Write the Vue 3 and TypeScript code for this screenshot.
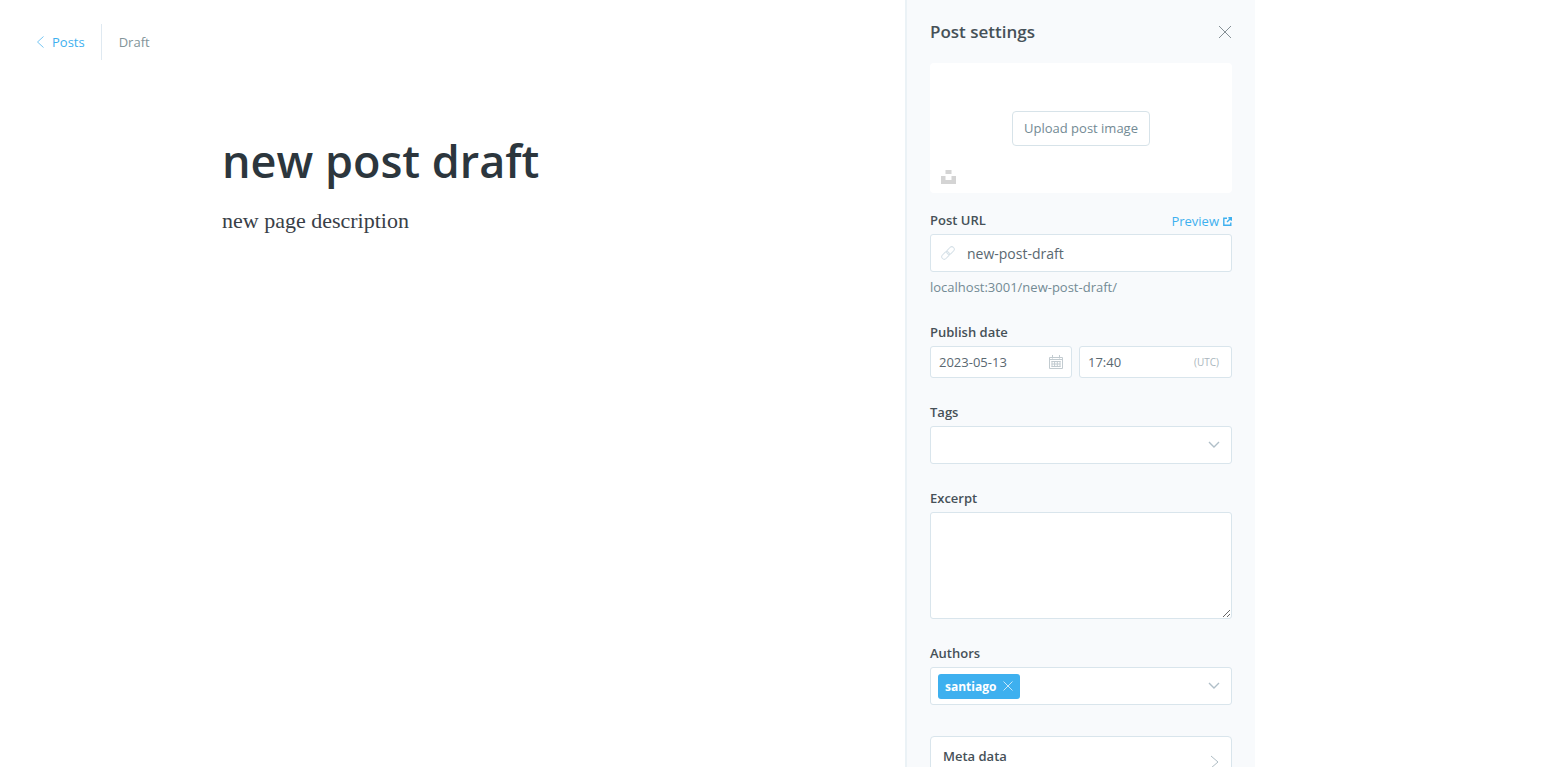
<script setup lang="ts">
import { ref } from 'vue'

const title = ref('new post draft')
const slug = ref('new-post-draft')
const publishDate = ref('2023-05-13')
const publishTime = ref('17:40')
const tag = ref('')
const excerpt = ref('')
const authors = ref<string[]>(['santiago'])

function removeAuthor(name: string): void {
  authors.value = authors.value.filter((author) => author !== name)
}
</script>

<template>
  <div class="screen">
    <main class="editor">
      <nav class="crumbs">
        <a class="back" href="#posts">
          <svg width="9" height="14" viewBox="0 0 9 14" aria-hidden="true">
            <path d="M7.5 1.5 1.5 7l6 5.5" />
          </svg>
          <span>Posts</span>
        </a>
        <span class="status">Draft</span>
      </nav>
      <article class="document">
        <input v-model="title" class="title" type="text" aria-label="Post title" spellcheck="false" />
        <p class="body">new page description</p>
      </article>
    </main>

    <aside class="panel">
      <header class="panel-head">
        <h2>Post settings</h2>
        <button class="close" type="button" aria-label="Close">
          <svg width="14" height="14" viewBox="0 0 14 14" aria-hidden="true">
            <path d="M1 1l12 12M13 1 1 13" />
          </svg>
        </button>
      </header>

      <section class="uploader">
        <button class="upload" type="button">Upload post image</button>
        <button class="unsplash" type="button" aria-label="Unsplash">
          <svg width="15" height="14" viewBox="0 0 15 14" aria-hidden="true">
            <path d="M4.5 0h6v4h-6zM0 6h4.5v4h6V6H15v8H0z" />
          </svg>
        </button>
      </section>

      <div class="field">
        <div class="label-row">
          <label for="slug">Post URL</label>
          <a class="preview" href="#preview">
            <span>Preview</span>
            <svg width="9" height="9" viewBox="0 0 9 9" aria-hidden="true">
              <path d="M4 1.2H.8v7h7V5.4M5.4.8h2.9v2.9M8 1 4 5" />
            </svg>
          </a>
        </div>
        <div class="box tall">
          <svg class="link-icon" width="14" height="14" viewBox="0 0 14 14" aria-hidden="true">
            <g transform="rotate(-45 7 7)">
              <rect x="-.8" y="4.5" width="8.6" height="5" rx="2.5" />
              <rect x="6.2" y="4.5" width="8.6" height="5" rx="2.5" />
            </g>
          </svg>
          <input id="slug" v-model="slug" class="slug" type="text" spellcheck="false" />
        </div>
        <p class="help">localhost:3001/{{ slug }}/</p>
      </div>

      <div class="field">
        <label for="publish-date">Publish date</label>
        <div class="dates">
          <div class="box">
            <input id="publish-date" v-model="publishDate" type="text" />
            <svg class="calendar" width="14" height="14" viewBox="0 0 14 14" aria-hidden="true">
              <path d="M.5 2.5h13v11H.5zM.5 4.5h13M3.5 0v3.5M10.5 0v3.5M2.5 6.5h9M2.5 9h9M2.5 11.5h9M3 6v6M5.6 6v6M8.3 6v6M11 6v6" />
            </svg>
          </div>
          <div class="box">
            <input v-model="publishTime" type="text" aria-label="Publish time" />
            <span class="zone">(UTC)</span>
          </div>
        </div>
      </div>

      <div class="field">
        <label for="tags">Tags</label>
        <div class="box tall">
          <select id="tags" v-model="tag"><option value=""></option></select>
          <svg class="chevron" width="12" height="8" viewBox="0 0 12 8" aria-hidden="true">
            <path d="M1 1l5 5 5-5" />
          </svg>
        </div>
      </div>

      <div class="field">
        <label for="excerpt">Excerpt</label>
        <textarea id="excerpt" v-model="excerpt"></textarea>
      </div>

      <div class="field">
        <label for="authors">Authors</label>
        <div class="box tall">
          <span v-for="author in authors" :key="author" class="chip">
            <span>{{ author }}</span>
            <button type="button" :aria-label="`Remove ${author}`" @click="removeAuthor(author)">
              <svg width="10" height="10" viewBox="0 0 10 10" aria-hidden="true">
                <path d="M.5.5l9 9M9.5.5l-9 9" />
              </svg>
            </button>
          </span>
          <select id="authors"><option value=""></option></select>
          <svg class="chevron" width="12" height="8" viewBox="0 0 12 8" aria-hidden="true">
            <path d="M1 1l5 5 5-5" />
          </svg>
        </div>
      </div>

      <button class="meta" type="button">
        <span>Meta data</span>
        <svg width="9" height="14" viewBox="0 0 9 14" aria-hidden="true">
          <path d="M1 1l7 6-7 6" />
        </svg>
      </button>
    </aside>
  </div>
</template>

<style>
body {
  margin: 0;
  background: #fff;
}
</style>

<style scoped>
.screen {
  display: grid;
  grid-template-columns: 1fr 350px 289px;
  height: 100vh;
  overflow: hidden;
  font-family: "Open Sans", "Noto Sans", sans-serif;
  font-size: 13px;
  color: #465158;
}
.screen *,
.screen *::before {
  box-sizing: border-box;
}
svg {
  display: block;
  flex: none;
  fill: none;
  stroke: currentColor;
}
button,
input,
select,
textarea {
  font: inherit;
  color: inherit;
}
button {
  padding: 0;
  border: 0;
  background: none;
  cursor: pointer;
}
a {
  color: #3eb0ef;
  text-decoration: none;
}
.editor {
  min-width: 0;
}
.crumbs {
  display: flex;
  align-items: center;
  height: 36px;
  margin: 24px 36px 0;
}
.back {
  display: flex;
  align-items: center;
  gap: 7px;
  height: 36px;
  padding-right: 16px;
  border-right: 1px solid #dfe9f1;
}
.back svg {
  opacity: 0.7;
}
.status {
  padding-left: 17px;
  color: #839499;
}
.document {
  margin: 68px 36px 0 222px;
}
.title {
  display: block;
  width: 100%;
  height: 64px;
  padding: 0;
  border: 0;
  outline: 0;
  background: none;
  color: #2c363d;
  font-size: 45px;
  font-weight: 600;
}
.body {
  margin: 14px 0 0;
  color: #394047;
  font-family: Georgia, "Liberation Serif", serif;
  font-size: 22px;
  line-height: 30px;
}
.panel {
  padding: 18px 23px 0;
  border-left: 2px solid #ebf2f6;
  background: #f8fafc;
  overflow: hidden;
}
.panel-head {
  display: flex;
  align-items: center;
  justify-content: space-between;
  height: 27px;
  margin-bottom: 18px;
}
h2 {
  margin: 0;
  font-size: 17px;
  font-weight: 600;
  line-height: 27px;
}
.close {
  color: #858f95;
}
.uploader {
  position: relative;
  display: flex;
  align-items: center;
  justify-content: center;
  height: 130px;
  margin-bottom: 18px;
  border-radius: 4px;
  background: #fff;
}
.upload {
  height: 35px;
  padding: 0 11px;
  border: 1px solid #d7e3e9;
  border-radius: 4px;
  color: #738a94;
}
.unsplash {
  position: absolute;
  bottom: 9px;
  left: 11px;
  color: #d4d4d4;
}
.unsplash svg {
  fill: currentColor;
  stroke: none;
}
.field {
  margin-bottom: 25px;
}
label {
  display: block;
  margin-bottom: 5px;
  font-weight: 600;
  line-height: 18px;
}
.label-row {
  display: flex;
  justify-content: space-between;
}
.preview {
  display: flex;
  align-items: center;
  gap: 4px;
  height: 20px;
}
.preview svg {
  stroke-width: 1.4;
}
.box {
  display: flex;
  align-items: center;
  min-width: 0;
  height: 32px;
  border: 1px solid #d9e5ec;
  border-radius: 3px;
  background: #fff;
}
.tall {
  height: 38px;
}
.box input,
.box select {
  flex: 1;
  align-self: stretch;
  min-width: 0;
  padding: 0 8px;
  border: 0;
  outline: 0;
  background: none;
  appearance: none;
  color: #5a6871;
}
.box .slug {
  padding: 0 12px;
  font-size: 14px;
}
.link-icon {
  margin-left: 10px;
  color: #d5e0e7;
}
.help {
  margin: 4px 0 0;
  color: #738a94;
  line-height: 22px;
}
.dates {
  display: grid;
  grid-template-columns: 142fr 153fr;
  gap: 7px;
}
.calendar {
  margin-right: 8px;
  color: #c2cbd0;
}
.zone {
  margin-right: 12px;
  color: #aab6bd;
  font-size: 10px;
}
.chevron {
  margin-right: 11px;
  color: #b0bfc8;
  stroke-width: 1.4;
}
textarea {
  display: block;
  width: 100%;
  height: 107px;
  padding: 8px;
  border: 1px solid #d9e5ec;
  border-radius: 3px;
  outline: 0;
  background: #fff;
  resize: vertical;
}
.chip {
  display: flex;
  align-items: center;
  gap: 7px;
  height: 25px;
  margin-left: 7px;
  padding: 0 7px;
  border-radius: 3px;
  background: #3eb0ef;
  color: #fff;
  font-size: 12px;
  font-weight: 700;
}
.chip svg {
  opacity: 0.7;
}
.meta {
  display: flex;
  align-items: flex-start;
  justify-content: space-between;
  width: 100%;
  height: 64px;
  margin-top: 31px;
  padding: 9px 12px;
  border: 1px solid #d9e5ec;
  border-radius: 4px;
  background: #fff;
  font-weight: 600;
  line-height: 20px;
}
.meta svg {
  margin-top: 9px;
  color: #afbdc4;
}
</style>
